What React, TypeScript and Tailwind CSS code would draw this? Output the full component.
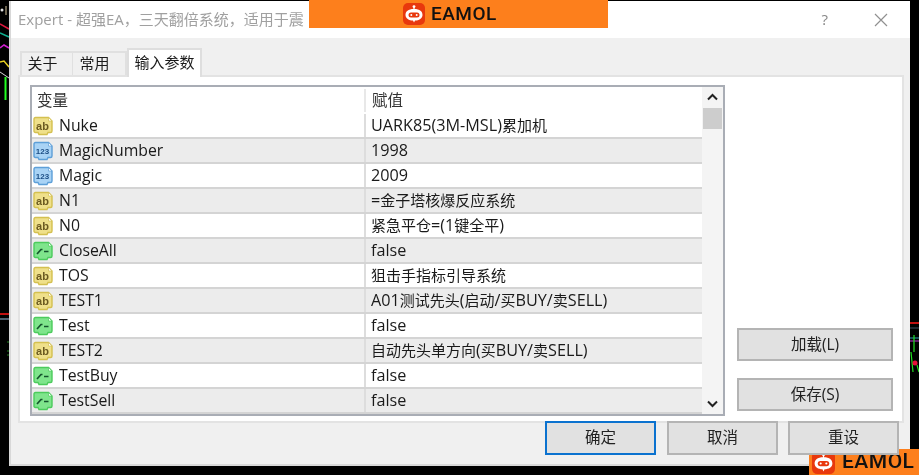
import React from "react";

const rows: [string, string, "ab" | "num" | "bool"][] = [
  ["Nuke", "UARK85(3M-MSL)累加机", "ab"],
  ["MagicNumber", "1998", "num"],
  ["Magic", "2009", "num"],
  ["N1", "=金子塔核爆反应系统", "ab"],
  ["N0", "紧急平仓=(1键全平)", "ab"],
  ["CloseAll", "false", "bool"],
  ["TOS", "狙击手指标引导系统", "ab"],
  ["TEST1", "A01测试先头(启动/买BUY/卖SELL)", "ab"],
  ["Test", "false", "bool"],
  ["TEST2", "自动先头单方向(买BUY/卖SELL)", "ab"],
  ["TestBuy", "false", "bool"],
  ["TestSell", "false", "bool"],
];

function Mixed({ text }: { text: string }) {
  const parts = text.split(/([\u4e00-\u9fff]+)/).filter(Boolean);
  return (
    <span className="whitespace-nowrap pl-[5px] text-[16.2px]">
      {parts.map((p, i) =>
        /[\u4e00-\u9fff]/.test(p) ? (
          <span key={i} className="text-[15px]">{p}</span>
        ) : (
          <span key={i}>{p}</span>
        ),
      )}
    </span>
  );
}

function TypeIcon({ kind }: { kind: "ab" | "num" | "bool" }) {
  const c =
    kind === "ab"
      ? { fill: "#efe08a", stroke: "#d4c050" }
      : kind === "num"
        ? { fill: "#a9d3f5", stroke: "#5d9fd8" }
        : { fill: "#7fe58c", stroke: "#4ccb5c" };
  return (
    <svg width="20" height="20" viewBox="0 0 20 20" className="shrink-0">
      <path
        d="M1 3 Q1 1.5 2.5 1.5 H15.5 L19 5 V15 Q19 16.5 17.5 16.5 H15 L14 18.5 H6 L5 16.5 H2.5 Q1 16.5 1 15 Z"
        fill={c.fill}
        stroke={c.stroke}
        strokeWidth="1.4"
      />
      <path d="M15.5 1.5 V5 H19 Z" fill="#fff" stroke={c.stroke} strokeWidth="0.7" />
      {kind === "ab" && (
        <text x="9.5" y="13.5" textAnchor="middle" fontSize="11" fontWeight="700" fill="#6b5a20" fontFamily="Liberation Sans, sans-serif">
          ab
        </text>
      )}
      {kind === "num" && (
        <text x="9.5" y="13" textAnchor="middle" fontSize="8" fontWeight="700" fill="#1d4f86" fontFamily="Liberation Sans, sans-serif">
          123
        </text>
      )}
      {kind === "bool" && (
        <path d="M4 13 L8 8.5 H9.5 M11 10.5 H15.5" fill="none" stroke="#14532d" strokeWidth="1.7" />
      )}
    </svg>
  );
}

function Logo({ size }: { size: number }) {
  return (
    <svg width={size} height={size} viewBox="0 0 22 22" className="shrink-0">
      <rect width="22" height="22" rx="5" fill="#e8380d" />
      <circle cx="11" cy="3.6" r="1.4" fill="#fff" />
      <rect x="10.4" y="4" width="1.2" height="3" fill="#fff" />
      <path d="M11 6 C17 6 19.5 8.5 19.5 12 C19.5 15.5 16 17.5 12 17.5 L11 19.5 L10 17.5 C6 17.5 2.5 15.5 2.5 12 C2.5 8.5 5 6 11 6 Z" fill="#fff" />
      <rect x="5.5" y="9.5" width="11" height="5" rx="2.5" fill="#e8380d" />
      <circle cx="8.3" cy="12" r="1" fill="#fff" />
      <circle cx="13.7" cy="12" r="1" fill="#fff" />
    </svg>
  );
}

function Btn({ label, className = "" }: { label: string; className?: string }) {
  return (
    <button className={`flex items-center justify-center bg-[#e1e1e1] border-2 border-[#b4b4b4] text-[15.5px] text-[#222] ${className}`}>
      {label}
    </button>
  );
}

export default function App() {
  return (
    <div
      className="relative h-[475px] w-[919px] overflow-hidden bg-black pl-[9px] pt-px text-[#1a1a1a] blur-[0.5px]"
      style={{ fontFamily: '"Open Sans", "Noto Sans CJK SC", sans-serif' }}
    >
      <svg className="absolute inset-0" width="919" height="475" viewBox="0 0 919 475" fill="none">
        <circle cx="2" cy="10" r="1.5" fill="#e0e0e0" />
        <path d="M6 6 V15" stroke="#d8c8a0" />
        <path d="M0 24 L9 29" stroke="#e01840" strokeWidth="1.5" />
        <path d="M0 33 L9 37" stroke="#10b090" strokeWidth="1.5" />
        <path d="M0 48 L4 45 L9 48" stroke="#d020d0" strokeWidth="1.5" />
        <path d="M0 62 L4 61 L9 67" stroke="#e8d020" strokeWidth="1.5" />
        <path d="M0 72 L9 78" stroke="#d8d8d8" />
        <path d="M5.5 77 V100" stroke="#20ff20" strokeWidth="2" />
        <path d="M0 314 H9" stroke="#c01010" strokeWidth="2" />
        <path d="M0 319 H9" stroke="#506070" strokeWidth="2" />
        <path d="M7 342 H9 M7 351 H9 M7 355 H9" stroke="#208020" />
        <path d="M910 323 H919" stroke="#c01010" strokeWidth="2" />
        <path d="M910 328 H919" stroke="#405060" />
        <path d="M910 338 H919" stroke="#30a0b0" />
        <path d="M910 341 H919" stroke="#c030d0" />
        <path d="M914 335 V352 M911 352 L913 372 M917 365 L919 372" stroke="#20e020" strokeWidth="1.2" />
        <circle cx="915" cy="363" r="2.5" fill="#e81038" />
      </svg>

      <div className="relative flex h-[465px] w-[901px] flex-col border-b-2 border-l-2 border-[#d8d8d8] bg-[#f0f0f0]">
        <div className="flex h-[37px] shrink-0 items-center bg-white pl-[7px] pr-[22px] text-[15px] text-[#a0a0a0]">
          <span className="whitespace-nowrap">Expert - 超强EA，三天翻倍系统，适用于震</span>
          <span className="ml-auto mr-[46px] text-[15px] text-[#888]">?</span>
          <svg width="14" height="14" viewBox="0 0 14 14" fill="none" stroke="#909090" strokeWidth="1.2">
            <path d="M1 1 L13 13 M13 1 L1 13" />
          </svg>
        </div>

        <div className="flex h-[37px] shrink-0 items-end pl-[9px] text-[15px]">
          <div className="flex h-[24px] w-[53px] items-center justify-center border-t-2 border-l-2 border-r border-[#e0e0e0] bg-[#f0f0f0] pr-[9px] pb-[2px]">关于</div>
          <div className="flex h-[24px] w-[54px] items-center justify-center border-t-2 border-r-2 border-[#e0e0e0] pr-[9px] pb-[2px]">常用</div>
          <div className="relative z-10 -mb-[2px] flex h-[29px] w-[75px] items-center justify-center border-x-2 border-t-2 border-[#dedede] bg-white pb-[2px]">输入参数</div>
        </div>

        <div className="ml-[7px] flex h-[348px] w-[886px] shrink-0 items-start border-2 border-[#e3e3e3] bg-white pl-[10px] pt-[8px]">
          <div className="flex h-[331px] w-[695px] shrink-0 border-2 border-[#a9adb5]">
            <div className="flex w-[670px] shrink-0 flex-col">
              <div className="flex h-[27px] shrink-0 items-center text-[15.5px] text-[#333]">
                <div className="w-[334px] border-r-2 border-[#e8e8e8] pl-[5px]">变量</div>
                <div className="pl-[6px]">赋值</div>
              </div>
              {rows.map((r, i) => (
                <div
                  key={r[0]}
                  className={`flex h-[25px] shrink-0 items-center border-b-2 border-[#d4d4d4] text-[15.8px] ${i % 2 ? "bg-[#ececec]" : "bg-white"}`}
                >
                  <div className="flex w-[334px] shrink-0 items-center gap-[6px] self-stretch border-r-2 border-[#dddddd] pl-[1px]">
                    <TypeIcon kind={r[2]} />
                    <span className="font-medium">{r[0]}</span>
                  </div>
                  <Mixed text={r[1]} />
                </div>
              ))}
            </div>
            <div className="flex w-[21px] shrink-0 flex-col items-center bg-[#f4f4f4]">
              <svg width="21" height="21" viewBox="0 0 21 21" fill="none" stroke="#222" strokeWidth="2" className="shrink-0">
                <path d="M6 12.5 L10.5 8 L15 12.5" />
              </svg>
              <div className="h-[21px] w-[19px] shrink-0 bg-[#cdcdcd]" />
              <svg width="21" height="21" viewBox="0 0 21 21" fill="none" stroke="#222" strokeWidth="2" className="mt-auto shrink-0">
                <path d="M6 8.5 L10.5 13 L15 8.5" />
              </svg>
            </div>
          </div>

          <div className="ml-[12px] flex h-[326px] flex-col justify-end gap-[17px]">
            <Btn label="加载(L)" className="h-[33px] w-[156px]" />
            <Btn label="保存(S)" className="h-[33px] w-[156px]" />
          </div>
        </div>

        <div className="relative z-10 -mt-[2px] flex justify-end gap-[10px] pr-[11px]">
          <Btn label="确定" className="mr-px h-[34px] w-[111px] !border-[#0b72cf]" />
          <Btn label="取消" className="h-[34px] w-[111px]" />
          <Btn label="重设" className="h-[34px] w-[111px]" />
        </div>
      </div>

      <div className="absolute left-[309px] top-0 flex h-[28px] w-[299px] items-center bg-[#fd7f1c] pl-[94px]">
        <Logo size={22} />
        <span className="ml-[6px] text-[19px] font-medium tracking-[0.5px] text-[#111]" style={{ fontFamily: 'Roboto, sans-serif' }}>EAMOL</span>
      </div>
      <div className="absolute bottom-0 right-0 flex h-[26px] w-[110px] items-center bg-[#fd7f1c] pl-[3px]">
        <Logo size={23} />
        <span className="ml-[7px] text-[21px] font-medium tracking-[0.5px] text-[#111]" style={{ fontFamily: 'Roboto, sans-serif' }}>EAMOL</span>
      </div>
    </div>
  );
}
